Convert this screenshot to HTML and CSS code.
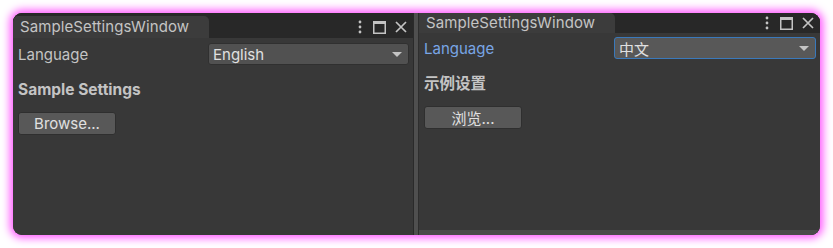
FILE: index.html
```html
<!DOCTYPE html>
<html lang="en">
<head>
    <meta charset="UTF-8">
    <title>Sample Settings</title>
    <link rel="stylesheet" href="styles.css">
</head>
<body>
    <div class="frame">
        <div class="window window-en">
            <div class="tabbar">
                <div class="tab">SampleSettingsWindow</div>
                <div class="tab-icons">
                    <svg class="icon" width="8" height="14" viewBox="0 0 8 14"><circle cx="4" cy="2" r="1.4"/><circle cx="4" cy="7" r="1.4"/><circle cx="4" cy="12" r="1.4"/></svg>
                    <svg class="icon" width="13" height="13" viewBox="0 0 13 13"><rect x="0.75" y="0.75" width="11.5" height="11.5" fill="none" stroke="#c4c4c4" stroke-width="1.5"/><rect x="0" y="0" width="13" height="3"/></svg>
                    <svg class="icon" width="12" height="12" viewBox="0 0 12 12"><path d="M1 1 L11 11 M11 1 L1 11" stroke="#c4c4c4" stroke-width="1.7" fill="none"/></svg>
                </div>
            </div>
            <div class="content">
                <div class="field-row">
                    <span class="label">Language</span>
                    <div class="dropdown">
                        <span>English</span>
                        <span class="arrow"></span>
                    </div>
                </div>
                <div class="heading">Sample Settings</div>
                <button class="btn">Browse...</button>
            </div>
        </div>
        <div class="splitter"></div>
        <div class="window window-zh">
            <div class="tabbar">
                <div class="tab">SampleSettingsWindow</div>
                <div class="tab-icons">
                    <svg class="icon" width="8" height="14" viewBox="0 0 8 14"><circle cx="4" cy="2" r="1.4"/><circle cx="4" cy="7" r="1.4"/><circle cx="4" cy="12" r="1.4"/></svg>
                    <svg class="icon" width="13" height="13" viewBox="0 0 13 13"><rect x="0.75" y="0.75" width="11.5" height="11.5" fill="none" stroke="#c4c4c4" stroke-width="1.5"/><rect x="0" y="0" width="13" height="3"/></svg>
                    <svg class="icon" width="12" height="12" viewBox="0 0 12 12"><path d="M1 1 L11 11 M11 1 L1 11" stroke="#c4c4c4" stroke-width="1.7" fill="none"/></svg>
                </div>
            </div>
            <div class="content">
                <div class="field-row">
                    <span class="label label-focus">Language</span>
                    <div class="dropdown dropdown-focus">
                        <span>中文</span>
                        <span class="arrow"></span>
                    </div>
                </div>
                <div class="heading">示例设置</div>
                <button class="btn">浏览...</button>
            </div>
        </div>
    </div>
</body>
</html>
```

FILE: styles.css
```css
* {
    margin: 0;
    padding: 0;
    box-sizing: border-box;
}
body {
    background: #ffffff;
    font-family: Inter, "Noto Sans CJK SC", sans-serif;
    font-size: 14px;
    color: #c4c4c4;
}
.frame {
    margin: 13px;
    width: 807px;
    height: 222px;
    border-radius: 9px;
    overflow: hidden;
    display: flex;
    background: #383838;
    box-shadow: 0 0 8px 3px #ff55ff;
}
.window {
    display: flex;
    flex-direction: column;
    background: #383838;
}
.window-en {
    width: 400px;
}
.window-zh {
    flex: 1;
    border-bottom: 5px solid #4a4a4a;
}
.splitter {
    width: 6px;
    background: #4f4f4f;
    border-left: 1px solid #2a2a2a;
    border-right: 1px solid #2e2e2e;
}
.tabbar {
    display: flex;
    align-items: flex-end;
    justify-content: space-between;
    background: #282828;
}
.window-en .tabbar {
    height: 25px;
}
.window-zh .tabbar {
    height: 20px;
}
.tab {
    width: 196px;
    background: #3c3c3c;
    border-radius: 0 5px 0 0;
    padding-left: 7px;
    font-size: 15px;
    letter-spacing: 0.1px;
    color: #c4c4c4;
}
.window-en .tab {
    height: 22px;
    line-height: 22px;
    border-radius: 5px 5px 0 0;
}
.window-zh .tab {
    height: 20px;
    line-height: 20px;
}
.tab-icons {
    display: flex;
    align-items: center;
    gap: 9px;
    padding-right: 6px;
    align-self: center;
}
.window-en .tab-icons {
    margin-top: 3px;
}
.icon {
    fill: #c4c4c4;
    display: block;
}
.content {
    flex: 1;
    padding: 0 4px 0 5px;
}
.window-en .content {
    padding-top: 5px;
}
.window-zh .content {
    padding-top: 4px;
}
.field-row {
    display: flex;
    align-items: center;
    height: 22px;
}
.label {
    width: 190px;
    font-size: 15px;
}
.label-focus {
    color: #79a6e6;
}
.dropdown {
    flex: 1;
    height: 22px;
    display: flex;
    align-items: center;
    justify-content: space-between;
    padding: 0 6px 0 4px;
    background: #515151;
    border: 1px solid #303030;
    border-radius: 3px;
    color: #e0e0e0;
    font-size: 15px;
}
.dropdown-focus {
    background: #585858;
    border-color: #3a79bb;
}
.arrow {
    width: 0;
    height: 0;
    border-left: 5px solid transparent;
    border-right: 5px solid transparent;
    border-top: 5px solid #c4c4c4;
}
.heading {
    margin-top: 16px;
    font-weight: 700;
    font-size: 15.5px;
    height: 18px;
    line-height: 18px;
}
.btn {
    margin-top: 13px;
    width: 98px;
    height: 23px;
    background: #585858;
    border: 1px solid #2f2f2f;
    border-radius: 3px;
    color: #e0e0e0;
    font-family: Inter, "Noto Sans CJK SC", sans-serif;
    font-size: 15px;
    display: block;
}
```
